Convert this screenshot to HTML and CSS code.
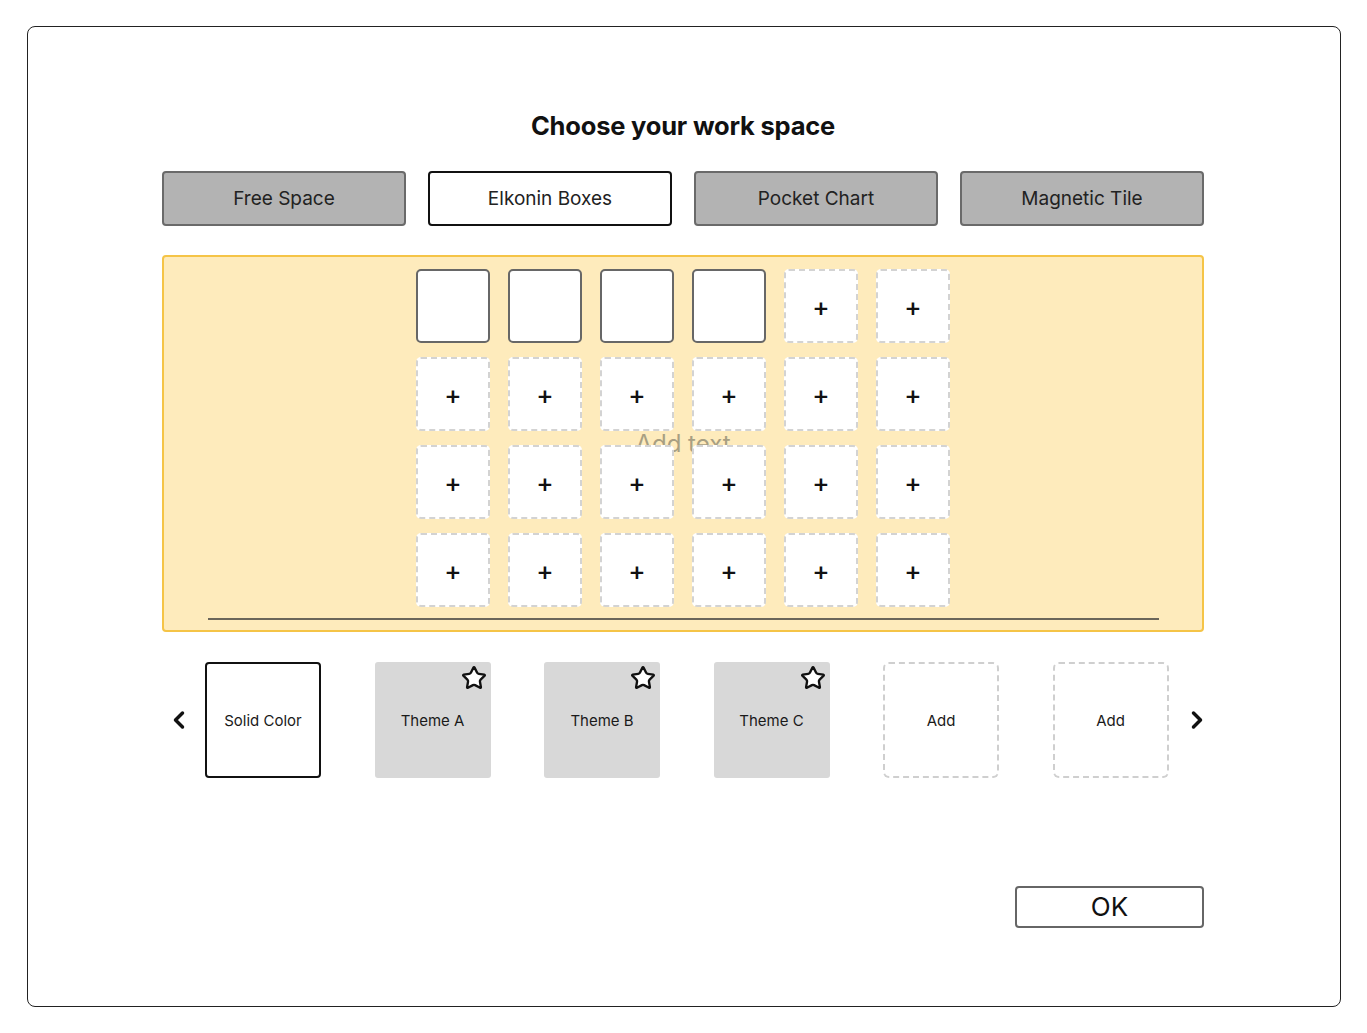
FILE: index.html
```html
<!DOCTYPE html>
<html lang="en">
<head>
<meta charset="utf-8">
<title>Choose your work space</title>
<link rel="stylesheet" href="styles.css">
</head>
<body>
<div class="frame">
  <div class="content">
    <h1 class="title">Choose your work space</h1>
    <div class="tabs">
      <div class="tab">Free Space</div>
      <div class="tab tab-active">Elkonin Boxes</div>
      <div class="tab">Pocket Chart</div>
      <div class="tab">Magnetic Tile</div>
    </div>
    <div class="panel">
      <div class="add-text">Add text</div>
      <div class="grid">
        <div class="cell cell-solid"></div>
        <div class="cell cell-solid"></div>
        <div class="cell cell-solid"></div>
        <div class="cell cell-solid"></div>
        <div class="cell cell-dash">+</div>
        <div class="cell cell-dash">+</div>
        <div class="cell cell-dash">+</div>
        <div class="cell cell-dash">+</div>
        <div class="cell cell-dash">+</div>
        <div class="cell cell-dash">+</div>
        <div class="cell cell-dash">+</div>
        <div class="cell cell-dash">+</div>
        <div class="cell cell-dash">+</div>
        <div class="cell cell-dash">+</div>
        <div class="cell cell-dash">+</div>
        <div class="cell cell-dash">+</div>
        <div class="cell cell-dash">+</div>
        <div class="cell cell-dash">+</div>
        <div class="cell cell-dash">+</div>
        <div class="cell cell-dash">+</div>
        <div class="cell cell-dash">+</div>
        <div class="cell cell-dash">+</div>
        <div class="cell cell-dash">+</div>
        <div class="cell cell-dash">+</div>
      </div>
      <div class="baseline"></div>
    </div>
    <div class="carousel">
      <svg class="chev chev-left" viewBox="0 0 24 24" width="28" height="28"><path d="M15 18l-6-6 6-6" fill="none" stroke="#111" stroke-width="3" stroke-linecap="round" stroke-linejoin="round"/></svg>
      <div class="cards">
        <div class="card card-solid">Solid Color</div>
        <div class="card card-theme">Theme A
          <svg class="star" viewBox="0 0 24 24" width="26" height="26"><path d="M11.525 2.295a.53.53 0 0 1 .95 0l2.31 4.679a2.123 2.123 0 0 0 1.595 1.16l5.166.756a.53.53 0 0 1 .294.904l-3.736 3.638a2.123 2.123 0 0 0-.611 1.878l.882 5.14a.53.53 0 0 1-.771.56l-4.618-2.428a2.122 2.122 0 0 0-1.973 0L6.396 21.01a.53.53 0 0 1-.77-.56l.881-5.139a2.122 2.122 0 0 0-.611-1.879L2.16 9.795a.53.53 0 0 1 .294-.906l5.165-.755a2.122 2.122 0 0 0 1.597-1.16z" fill="#fff" stroke="#111" stroke-width="2.2" stroke-linejoin="round"/></svg>
        </div>
        <div class="card card-theme">Theme B
          <svg class="star" viewBox="0 0 24 24" width="26" height="26"><path d="M11.525 2.295a.53.53 0 0 1 .95 0l2.31 4.679a2.123 2.123 0 0 0 1.595 1.16l5.166.756a.53.53 0 0 1 .294.904l-3.736 3.638a2.123 2.123 0 0 0-.611 1.878l.882 5.14a.53.53 0 0 1-.771.56l-4.618-2.428a2.122 2.122 0 0 0-1.973 0L6.396 21.01a.53.53 0 0 1-.77-.56l.881-5.139a2.122 2.122 0 0 0-.611-1.879L2.16 9.795a.53.53 0 0 1 .294-.906l5.165-.755a2.122 2.122 0 0 0 1.597-1.16z" fill="#fff" stroke="#111" stroke-width="2.2" stroke-linejoin="round"/></svg>
        </div>
        <div class="card card-theme">Theme C
          <svg class="star" viewBox="0 0 24 24" width="26" height="26"><path d="M11.525 2.295a.53.53 0 0 1 .95 0l2.31 4.679a2.123 2.123 0 0 0 1.595 1.16l5.166.756a.53.53 0 0 1 .294.904l-3.736 3.638a2.123 2.123 0 0 0-.611 1.878l.882 5.14a.53.53 0 0 1-.771.56l-4.618-2.428a2.122 2.122 0 0 0-1.973 0L6.396 21.01a.53.53 0 0 1-.77-.56l.881-5.139a2.122 2.122 0 0 0-.611-1.879L2.16 9.795a.53.53 0 0 1 .294-.906l5.165-.755a2.122 2.122 0 0 0 1.597-1.16z" fill="#fff" stroke="#111" stroke-width="2.2" stroke-linejoin="round"/></svg>
        </div>
        <div class="card card-add">Add</div>
        <div class="card card-add">Add</div>
      </div>
      <svg class="chev chev-right" viewBox="0 0 24 24" width="28" height="28"><path d="M9 18l6-6-6-6" fill="none" stroke="#111" stroke-width="3" stroke-linecap="round" stroke-linejoin="round"/></svg>
    </div>
    <div class="footer">
      <button class="ok">OK</button>
    </div>
  </div>
</div>
</body>
</html>
```
FILE: styles.css
```css
* { box-sizing: border-box; }
html, body { margin: 0; padding: 0; background: #fff; }
body {
  font-family: Inter, "Noto Sans", "Liberation Sans", sans-serif;
  color: #1a1a1a;
}
.frame {
  margin: 26px 26px 0 27px;
  height: 981px;
  border: 1.5px solid #222;
  border-radius: 8px;
  padding: 84px 2px 0 0;
}
.content {
  width: 1042px;
  margin: 0 auto;
}
.title {
  margin: 0;
  text-align: center;
  font-size: 25.5px;
  line-height: 30px;
  font-weight: 700;
  color: #111;
  letter-spacing: -0.2px;
}
.tabs {
  margin-top: 30px;
  display: grid;
  grid-template-columns: repeat(4, 244px);
  column-gap: 22px;
}
.tab {
  height: 55px;
  display: flex;
  align-items: center;
  justify-content: center;
  background: #b3b3b3;
  border: 2px solid #6a6a6a;
  border-radius: 4px;
  font-size: 19px;
  color: #222;
}
.tab-active {
  background: #fff;
  border-color: #111;
}
.panel {
  position: relative;
  margin-top: 29px;
  height: 377px;
  background: #feebbc;
  border: 2px solid #f5c447;
  border-radius: 4px;
  padding-top: 12px;
}
.add-text {
  position: absolute;
  left: 0;
  right: 0;
  top: 172px;
  text-align: center;
  font-size: 24px;
  line-height: 30px;
  color: #a89f82;
}
.grid {
  position: relative;
  display: grid;
  grid-template-columns: repeat(6, 74px);
  grid-auto-rows: 74px;
  column-gap: 18px;
  row-gap: 14px;
  justify-content: center;
}
.cell {
  background: #fff;
  border-radius: 5px;
  display: flex;
  align-items: center;
  justify-content: center;
  font-size: 26px;
  font-weight: 500;
  color: #111;
}
.cell-solid {
  border: 2px solid #676767;
}
.cell-dash {
  border: 2px dashed #d3d3d3;
}
.baseline {
  margin: 11px 43px 0 44px;
  height: 2px;
  background: #6b665a;
}
.carousel {
  margin-top: 30px;
  display: flex;
  align-items: center;
  padding-left: 3px;
}
.chev { display: block; flex: none; }
.chev-left { margin-right: 12px; }
.chev-right { margin-left: 14px; }
.cards {
  display: flex;
  gap: 53.5px;
}
.card {
  position: relative;
  width: 116px;
  height: 116px;
  display: flex;
  align-items: center;
  justify-content: center;
  font-size: 15px;
  color: #1a1a1a;
  border-radius: 4px;
}
.card-solid {
  border: 2px solid #111;
}
.card-theme {
  background: #d8d8d8;
  border-radius: 3px;
}
.card-add {
  border: 2px dashed #cfcfcf;
  border-radius: 6px;
}
.star {
  position: absolute;
  top: 3px;
  right: 4px;
}
.footer {
  margin-top: 108px;
  display: flex;
  justify-content: flex-end;
}
.ok {
  width: 189px;
  height: 42px;
  background: #fff;
  border: 2px solid #666;
  border-radius: 4px;
  font-family: Inter, "Noto Sans", "Liberation Sans", sans-serif;
  font-size: 26px;
  color: #111;
  padding: 0;
  line-height: 1;
}
```
